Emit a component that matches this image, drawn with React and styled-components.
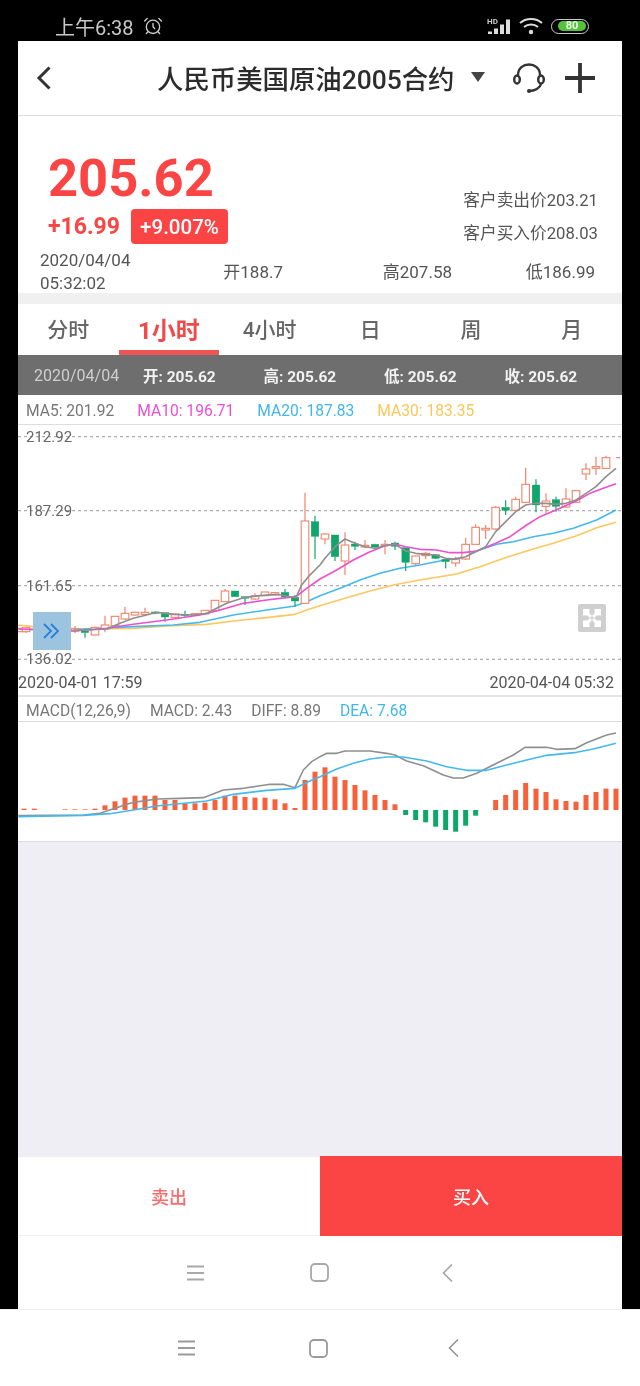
import React from "react";
import styled, { createGlobalStyle } from "styled-components";
import { AlarmClock } from "lucide-react";

// chart data was read off 3x crops, so coordinates are crop px
const lx = (x) => x / 3;
const rx = (x) => x / 3 + 320;
const cy = (y) => y / 3 + 425;
const my = (y) => y / 3 + 695;

// [x, wickTop, bodyTop, bodyBottom, wickBottom, up]
const leftCandles = [
	[60, 610, 610, 620, 622, 1],
	[78, 606, 608, 620, 624, 1],
	[225, 603, 612, 618, 625, 1],
	[255, 618, 618, 623, 638, 0],
	[285, 605, 607, 630, 632, 1],
	[315, 572, 600, 612, 622, 1],
	[345, 574, 574, 602, 604, 1],
	[375, 545, 565, 582, 585, 1],
	[405, 560, 562, 570, 572, 1],
	[435, 548, 562, 568, 572, 1],
	[465, 559, 561, 565, 568, 0],
	[495, 563, 563, 576, 590, 0],
	[525, 566, 567, 577, 578, 1],
	[555, 557, 568, 572, 575, 0],
	[585, 565, 566, 571, 573, 1],
	[615, 555, 556, 567, 569, 1],
	[645, 525, 526, 556, 558, 1],
	[675, 492, 498, 530, 531, 1],
	[705, 498, 498, 515, 516, 0],
	[735, 515, 515, 520, 540, 0],
	[765, 505, 512, 522, 525, 1],
	[795, 500, 501, 512, 513, 1],
	[825, 502, 503, 510, 512, 1],
	[855, 492, 502, 516, 518, 0],
	[885, 510, 517, 528, 545, 0],
	[915, 203, 288, 535, 537, 1],
	[945, 272, 290, 334, 402, 0],
];

const rightCandles = [
	[15, 325, 327, 342, 358, 1],
	[45, 330, 330, 395, 408, 0],
	[75, 322, 360, 408, 450, 1],
	[105, 350, 357, 364, 375, 0],
	[135, 345, 361, 366, 370, 1],
	[165, 356, 358, 366, 368, 0],
	[195, 345, 358, 362, 388, 1],
	[225, 350, 354, 364, 375, 0],
	[257, 368, 368, 412, 438, 0],
	[287, 392, 393, 416, 420, 1],
	[317, 380, 385, 392, 402, 1],
	[347, 388, 389, 400, 402, 0],
	[377, 403, 403, 410, 430, 0],
	[407, 395, 402, 414, 425, 1],
	[437, 338, 358, 402, 405, 1],
	[467, 298, 307, 358, 360, 1],
	[497, 300, 310, 315, 342, 1],
	[527, 243, 247, 312, 314, 1],
	[557, 226, 247, 256, 270, 0],
	[587, 215, 223, 256, 258, 1],
	[617, 128, 178, 232, 234, 1],
	[648, 163, 180, 240, 262, 0],
	[678, 205, 228, 244, 265, 1],
	[708, 215, 224, 244, 260, 0],
	[738, 190, 222, 246, 248, 1],
	[768, 195, 197, 232, 234, 1],
	[798, 115, 132, 147, 165, 1],
	[828, 95, 125, 130, 150, 1],
	[858, 92, 98, 130, 132, 1],
];

const candles = [
	...leftCandles.map(([x, ...rest]) => [lx(x), ...rest]),
	...rightCandles.map(([x, ...rest]) => [rx(x), ...rest]),
];

const line = (left, right, toY) =>
	[
		...left.map(([x, y]) => `${lx(x)},${toY(y)}`),
		...right.map(([x, y]) => `${rx(x)},${toY(y)}`),
	].join(" ");

const ma5 = line(
	[[220, 616], [320, 612], [360, 595], [400, 580], [440, 570], [470, 562], [520, 568], [580, 570], [620, 565], [650, 550], [680, 535], [730, 518], [780, 512], [830, 508], [870, 515], [888, 518], [905, 480], [925, 455]],
	[[0, 420], [15, 400], [45, 365], [75, 342], [105, 355], [135, 365], [165, 370], [195, 362], [225, 358], [257, 378], [287, 385], [317, 388], [347, 390], [377, 400], [407, 403], [437, 395], [467, 380], [497, 365], [527, 320], [557, 290], [587, 260], [617, 240], [648, 235], [678, 235], [708, 238], [738, 235], [768, 225], [798, 205], [828, 185], [858, 155], [888, 130]],
	cy
);
const ma10 = line(
	[[55, 612], [220, 618], [320, 610], [400, 598], [500, 585], [600, 570], [650, 558], [730, 535], [800, 525], [860, 518], [888, 515], [920, 490]],
	[[0, 462], [50, 435], [100, 405], [150, 380], [195, 362], [225, 357], [257, 365], [300, 373], [350, 375], [390, 383], [430, 383], [470, 378], [527, 355], [570, 335], [620, 300], [660, 275], [708, 255], [768, 228], [810, 205], [850, 190], [888, 176]],
	cy
);
const ma20 = line(
	[[55, 615], [100, 613], [250, 612], [400, 605], [520, 600], [600, 592], [700, 570], [800, 555], [885, 543], [920, 530]],
	[[0, 512], [60, 490], [120, 465], [180, 445], [240, 430], [300, 420], [360, 408], [420, 398], [470, 378], [530, 358], [580, 350], [640, 335], [700, 325], [760, 310], [830, 285], [888, 255]],
	cy
);
const ma30 = line(
	[[55, 600], [100, 605], [250, 612], [400, 610], [500, 603], [620, 598], [700, 588], [800, 578], [885, 568], [920, 555]],
	[[0, 542], [80, 518], [150, 498], [220, 480], [300, 465], [410, 447], [480, 425], [560, 397], [640, 372], [700, 355], [770, 332], [830, 308], [888, 292]],
	cy
);

const gridLines = [
	{ y: 436.7, label: "212.92" },
	{ y: 510.7, label: "187.29" },
	{ y: 585.7, label: "161.65" },
	{ y: 659.3, label: "136.02" },
];

const macdBase = 345;
// [x, top] in crop px, everything hangs on macdBase
const macdLeft = [[72, 341], [103, 341], [195, 343], [225, 343], [255, 343], [285, 341], [315, 331], [345, 319], [375, 308], [405, 302], [435, 302], [465, 302], [495, 315], [525, 315], [555, 325], [585, 325], [615, 323], [645, 315], [675, 302], [705, 302], [735, 306], [765, 308], [795, 308], [825, 313], [855, 325], [885, 339], [915, 255], [945, 230]];
const macdRight = [[15, 217], [45, 245], [75, 255], [105, 270], [135, 286], [165, 300], [195, 315], [225, 328], [527, 315], [557, 300], [587, 285], [617, 264], [648, 281], [678, 291], [708, 313], [738, 318], [768, 320], [798, 300], [828, 291], [858, 281], [888, 281]];
const macdDown = [[257, 360], [287, 375], [317, 382], [347, 395], [377, 405], [407, 410], [437, 392], [467, 362]];

const macdGray = line(
	[[55, 362], [250, 360], [300, 355], [345, 340], [400, 322], [470, 312], [540, 310], [610, 308], [670, 285], [730, 280], [810, 268], [850, 268], [885, 278], [910, 225], [935, 200]],
	[[0, 185], [20, 175], [50, 175], [75, 168], [150, 168], [200, 175], [225, 180], [260, 198], [310, 212], [370, 240], [400, 249], [430, 249], [470, 235], [530, 205], [580, 180], [615, 157], [680, 157], [710, 163], [765, 161], [800, 143], [860, 120], [888, 114]],
	my
);
const macdBlue = line(
	[[55, 365], [250, 361], [330, 356], [400, 345], [470, 333], [620, 318], [700, 298], [800, 286], [885, 280], [930, 258]],
	[[0, 245], [50, 222], [100, 205], [150, 192], [200, 186], [250, 186], [320, 198], [380, 215], [440, 226], [500, 226], [560, 210], [620, 195], [680, 181], [770, 172], [820, 162], [888, 145]],
	my
);

const RED = "#fb4545";
const GREEN = "#0ea66b";
const CANDLE_UP = "#f0836a";
const BAR_UP = "#f4613a";
const FONT = `Roboto, "Noto Sans CJK SC", sans-serif`;

function Candles() {
	return candles.map(([x, wt, bt, bb, wb, up]) => {
		const color = up ? CANDLE_UP : GREEN;
		return (
			<g key={x}>
				<line x1={x} x2={x} y1={cy(wt)} y2={cy(bt)} stroke={color} strokeWidth="1.2" />
				<line x1={x} x2={x} y1={cy(bb)} y2={cy(wb)} stroke={color} strokeWidth="1.2" />
				<rect
					x={x - 3.8}
					y={cy(bt)}
					width="7.6"
					height={(bb - bt) / 3}
					fill={up ? "#fff" : color}
					stroke={color}
					strokeWidth={up ? 1.1 : 0.4}
				/>
			</g>
		);
	});
}

function MainChart() {
	return (
		<ChartSvg viewBox="18 425 604 245" width="604" height="245">
			{gridLines.map((g) => (
				<line key={g.y} x1="18" x2="622" y1={g.y} y2={g.y} stroke="#9a9a9a" strokeDasharray="3 3" />
			))}
			<polyline points={ma30} fill="none" stroke="#fbc85f" strokeWidth="1.6" strokeLinejoin="round" />
			<polyline points={ma20} fill="none" stroke="#45b9ec" strokeWidth="1.6" strokeLinejoin="round" />
			<Candles />
			<line x1={rx(888)} x2={rx(900)} y1={cy(98)} y2={cy(98)} stroke={CANDLE_UP} strokeWidth="1.2" />
			<polyline points={ma10} fill="none" stroke="#ec4fd0" strokeWidth="1.6" strokeLinejoin="round" />
			<polyline points={ma5} fill="none" stroke="#8f8f8f" strokeWidth="1.6" strokeLinejoin="round" />
			{gridLines.map((g) => (
				<AxisLabel key={g.label} x="26" y={g.y + 5}>
					{g.label}
				</AxisLabel>
			))}
		</ChartSvg>
	);
}

function MacdChart() {
	const base = my(macdBase);
	return (
		<ChartSvg viewBox="18 722 604 119" width="604" height="119">
			{macdLeft.map(([x, top]) => (
				<rect key={x} x={lx(x) - 2.5} y={my(top)} width="5" height={(macdBase - top) / 3} fill={BAR_UP} />
			))}
			{macdRight.map(([x, top]) => (
				<rect key={x} x={rx(x) - 2.5} y={my(top)} width="5" height={(macdBase - top) / 3} fill={BAR_UP} />
			))}
			{macdDown.map(([x, bottom]) => (
				<rect key={x} x={rx(x) - 2.5} y={base} width="5" height={(bottom - macdBase) / 3} fill={GREEN} />
			))}
			<polyline points={macdGray} fill="none" stroke="#8f8f8f" strokeWidth="1.6" strokeLinejoin="round" />
			<polyline points={macdBlue} fill="none" stroke="#45b9ec" strokeWidth="1.6" strokeLinejoin="round" />
		</ChartSvg>
	);
}

function StatusIcons() {
	return (
		<StatusRight>
			<svg width="24" height="18" viewBox="0 0 24 18">
				<HdText x="0" y="7">
					HD
				</HdText>
				<path d="M1 17V14.5H5V17ZM7 17V11.5H11V17ZM13 17V7.5H17V17ZM19 17V2.5H23V17Z" fill="#ddd" />
			</svg>
			<svg width="24" height="18" viewBox="0 0 24 18" fill="none" stroke="#ddd" strokeWidth="2">
				<path d="M1 6C7 0.5 17 0.5 23 6" />
				<path d="M5 10C9 6.5 15 6.5 19 10" />
				<circle cx="12" cy="15" r="2.2" fill="#ddd" stroke="none" />
			</svg>
			<Battery>
				<BatteryLevel>80</BatteryLevel>
			</Battery>
		</StatusRight>
	);
}

function NavKeys({ color, columns, pad }) {
	return (
		<NavBar $columns={columns} $pad={pad}>
			<svg width="17" height="16" viewBox="0 0 17 16" stroke={color} strokeWidth="1.8">
				<path d="M0 1.5H17M0 8H17M0 14.5H17" />
			</svg>
			<svg width="19" height="19" viewBox="0 0 19 19" fill="none" stroke={color} strokeWidth="1.8">
				<rect x="1" y="1" width="17" height="17" rx="4" />
			</svg>
			<svg width="11" height="18" viewBox="0 0 11 18" fill="none" stroke={color} strokeWidth="1.7">
				<path d="M10 0.5L1.5 9L10 17.5" />
			</svg>
		</NavBar>
	);
}

function App() {
	return (
		<Page>
			<GlobalStyle />
			<StatusBar>
				<StatusLeft>
					<span>上午6:38</span>
					<AlarmClock size={20} strokeWidth={1.6} color="#ccc" />
				</StatusLeft>
				<StatusIcons />
			</StatusBar>

			<Screen>
				<Header>
					<svg width="16" height="24" viewBox="0 0 16 24" fill="none" stroke="#333" strokeWidth="3">
						<path d="M13.5 1.5L3 12L13.5 22.5" />
					</svg>
					<Title>人民币美国原油2005合约</Title>
					<Caret />
					<HeaderIcons>
						<svg width="32" height="32" viewBox="0 0 32 32" fill="none" stroke="#333" strokeWidth="2.4">
							<path d="M5 13C5 -1 27 -1 27 13" />
							<ellipse cx="4" cy="17.5" rx="2.8" ry="4" />
							<ellipse cx="28" cy="17.5" rx="2.8" ry="4" />
							<path d="M28 22C27 26 22 29 16 29" />
							<circle cx="16" cy="29" r="2" fill="#333" stroke="none" />
						</svg>
						<svg width="30" height="30" viewBox="0 0 30 30" stroke="#333" strokeWidth="3.8">
							<path d="M15 0V30M0 15H30" />
						</svg>
					</HeaderIcons>
				</Header>

				<Quote>
					<QuoteTop>
						<div>
							<Price>205.62</Price>
							<ChangeRow>
								<Change>+16.99</Change>
								<Badge>+9.007%</Badge>
							</ChangeRow>
						</div>
						<BidAsk>
							<span>客户卖出价203.21</span>
							<span>客户买入价208.03</span>
						</BidAsk>
					</QuoteTop>
					<QuoteBottom>
						<QuoteTime>
							2020/04/04
							<br />
							05:32:02
						</QuoteTime>
						<OhlcItem $width={153}>开188.7</OhlcItem>
						<OhlcItem $width={169}>高207.58</OhlcItem>
						<OhlcItem $width={143}>低186.99</OhlcItem>
					</QuoteBottom>
				</Quote>

				<Tabs>
					{["分时", "1小时", "4小时", "日", "周", "月"].map((t) => (
						<Tab key={t} $active={t === "1小时"}>
							{t}
						</Tab>
					))}
				</Tabs>

				<OhlcBar>
					<OhlcDate>2020/04/04</OhlcDate>
					<OhlcValue>开: 205.62</OhlcValue>
					<OhlcValue>高: 205.62</OhlcValue>
					<OhlcValue>低: 205.62</OhlcValue>
					<OhlcValue>收: 205.62</OhlcValue>
				</OhlcBar>

				<Legend>
					<LegendItem $color="#777">MA5: 201.92</LegendItem>
					<LegendItem $color="#e94fd6">MA10: 196.71</LegendItem>
					<LegendItem $color="#3fb6ec">MA20: 187.83</LegendItem>
					<LegendItem $color="#fbc65a">MA30: 183.35</LegendItem>
				</Legend>

				<ChartArea>
					<MainChart />
					<SlideHandle>
						<svg width="20" height="20" viewBox="0 0 20 20" fill="none" stroke="#2b7fdc" strokeWidth="1.8">
							<path d="M2 3L9 10L2 17M9 3L16 10L9 17" />
						</svg>
					</SlideHandle>
					<FullscreenButton>
						<svg width="18" height="18" viewBox="0 0 18 18" fill="#fff" stroke="#fff">
							<path d="M0 0H6V6H0ZM12 0H18V6H12ZM0 12H6V18H0ZM12 12H18V18H12Z" />
							<path d="M5 5L13 13M13 5L5 13" strokeWidth="3" />
							<rect x="7.5" y="7.5" width="3" height="3" fill="#cfcfcf" stroke="none" />
						</svg>
					</FullscreenButton>
				</ChartArea>

				<TimeRow>
					<span>2020-04-01 17:59</span>
					<span>2020-04-04 05:32</span>
				</TimeRow>

				<MacdLegend>
					<LegendItem $color="#777">MACD(12,26,9)</LegendItem>
					<LegendItem $color="#777">MACD: 2.43</LegendItem>
					<LegendItem $color="#777">DIFF: 8.89</LegendItem>
					<LegendItem $color="#3fb6ec">DEA: 7.68</LegendItem>
				</MacdLegend>

				<MacdArea>
					<MacdChart />
				</MacdArea>

				<Filler />

				<TradeRow>
					<TradeButton>卖出</TradeButton>
					<TradeButton $buy>买入</TradeButton>
				</TradeRow>

				<InnerNav>
					<NavKeys color="#a8a8a8" columns={[123, 132]} pad={169} />
				</InnerNav>
			</Screen>

			<OuterNav>
				<NavKeys color="#9a9a9a" columns={[131, 139]} pad={178} />
			</OuterNav>
		</Page>
	);
}

const GlobalStyle = createGlobalStyle`
	html, body {
		margin: 0;
		padding: 0;
		background: #000;
	}
	* {
		box-sizing: border-box;
	}
`;

const Page = styled.div`
	width: 640px;
	height: 1386px;
	background: #000;
	display: flex;
	flex-direction: column;
	font-family: ${FONT};
	overflow: hidden;
	filter: blur(0.45px);
`;

const StatusBar = styled.div`
	height: 41px;
	flex: none;
	display: flex;
	align-items: center;
	justify-content: space-between;
	padding: 11px 51px 0 55px;
	color: #c8c8c8;
	font-size: 20px;
`;

const StatusLeft = styled.div`
	display: flex;
	align-items: center;
	gap: 9px;
`;

const StatusRight = styled.div`
	display: flex;
	align-items: center;
	gap: 8px;
`;

const HdText = styled.text`
	font-size: 8px;
	font-weight: 700;
	fill: #ccc;
	font-family: Roboto, sans-serif;
`;

const Battery = styled.div`
	width: 38px;
	height: 15px;
	border: 1.5px solid #ccc;
	border-radius: 8px;
	padding: 1.5px 2px 1.5px 6px;
	display: flex;
`;

const BatteryLevel = styled.div`
	flex: 1;
	border-radius: 5px;
	background: #56c23c;
	color: #eaffea;
	font-size: 11px;
	font-weight: 700;
	line-height: 9px;
	text-align: center;
`;

const Screen = styled.div`
	flex: 1;
	margin: 0 18px;
	background: #fff;
	display: flex;
	flex-direction: column;
	min-height: 0;
`;

const Header = styled.div`
	height: 75px;
	flex: none;
	display: flex;
	align-items: center;
	padding: 0 27px 0 18px;
	border-bottom: 1px solid #dcdcdc;
`;

const Title = styled.div`
	margin-left: 105px;
	margin-top: -2px;
	font-size: 26.4px;
	font-weight: 500;
	color: #2c2c2c;
	white-space: nowrap;
`;

const Caret = styled.div`
	margin-left: 16px;
	margin-top: -3px;
	width: 0;
	height: 0;
	border-left: 7px solid transparent;
	border-right: 7px solid transparent;
	border-top: 10px solid #444;
`;

const HeaderIcons = styled.div`
	margin-left: auto;
	display: flex;
	align-items: center;
	gap: 20px;
`;

const Quote = styled.div`
	flex: none;
	border-bottom: 11px solid #f0f0f0;
	display: flex;
	flex-direction: column;
	height: 188px;
`;

const QuoteTop = styled.div`
	display: flex;
	justify-content: space-between;
	align-items: flex-end;
	padding: 32px 24px 0 30px;
	height: 128px;
`;

const Price = styled.div`
	font-size: 52.5px;
	line-height: 60px;
	font-weight: 700;
	color: ${RED};
	margin-top: 1px;
`;

const ChangeRow = styled.div`
	display: flex;
	align-items: center;
	gap: 11px;
	margin-top: 1px;
`;

const Change = styled.span`
	font-size: 23px;
	font-weight: 700;
	color: ${RED};
`;

const Badge = styled.span`
	height: 35px;
	width: 97px;
	background: ${RED};
	border-radius: 4px;
	color: #fff;
	font-size: 20.5px;
	font-weight: 500;
	display: flex;
	align-items: center;
	justify-content: center;
`;

const BidAsk = styled.div`
	display: flex;
	flex-direction: column;
	gap: 11px;
	font-size: 16.7px;
	line-height: 22px;
	color: #555;
	position: relative;
	top: 1px;
`;

const QuoteBottom = styled.div`
	display: flex;
	align-items: center;
	padding: 5px 0 0 22px;
	font-size: 17px;
	color: #555;
`;

const QuoteTime = styled.div`
	width: 90px;
	line-height: 23px;
	white-space: nowrap;
`;

const OhlcItem = styled.div`
	width: ${(p) => p.$width}px;
	margin-top: -4px;
	text-align: right;
	white-space: nowrap;
`;

const Tabs = styled.div`
	height: 51px;
	flex: none;
	display: grid;
	grid-template-columns: repeat(6, 1fr);
`;

const Tab = styled.div`
	display: flex;
	align-items: center;
	justify-content: center;
	padding-top: 2px;
	font-size: ${(p) => (p.$active ? "24px" : "21px")};
	font-weight: ${(p) => (p.$active ? 700 : 500)};
	color: ${(p) => (p.$active ? "#f04a4a" : "#666")};
	border-bottom: 5px solid ${(p) => (p.$active ? "#ee5555" : "transparent")};
`;

const OhlcBar = styled.div`
	height: 40px;
	flex: none;
	background: #6e6e6e;
	display: grid;
	grid-template-columns: 109px repeat(4, 120.5px);
	align-items: center;
	padding-left: 16px;
	font-size: 15.5px;
`;

const OhlcDate = styled.span`
	color: #cfcfcf;
	font-size: 16px;
`;

const OhlcValue = styled.span`
	color: #f2f2f2;
	font-weight: 700;
`;

const Legend = styled.div`
	height: 30px;
	flex: none;
	display: flex;
	align-items: center;
	gap: 23px;
	padding: 2px 0 0 8px;
	border-bottom: 1px solid #ddd;
`;

const LegendItem = styled.span`
	font-size: 15.6px;
	color: ${(p) => p.$color};
	white-space: nowrap;
`;

const ChartArea = styled.div`
	position: relative;
	height: 245px;
	flex: none;
`;

const ChartSvg = styled.svg`
	display: block;
`;

const AxisLabel = styled.text`
	font-size: 15px;
	fill: #666;
	font-family: ${FONT};
`;

const SlideHandle = styled.div`
	position: absolute;
	left: 15px;
	top: 187px;
	width: 38px;
	height: 38px;
	background: #9cc4df;
	display: flex;
	align-items: center;
	justify-content: center;
`;

const FullscreenButton = styled.div`
	position: absolute;
	left: 560px;
	top: 179px;
	width: 28px;
	height: 28px;
	background: #cfcfcf;
	border-radius: 2px;
	display: flex;
	align-items: center;
	justify-content: center;
`;

const TimeRow = styled.div`
	height: 27px;
	flex: none;
	display: flex;
	align-items: center;
	justify-content: space-between;
	padding-right: 8px;
	font-size: 16px;
	color: #555;
	border-bottom: 2px solid #e4e4e4;
`;

const MacdLegend = styled(Legend)`
	height: 25px;
	gap: 19px;
	padding-top: 4px;
`;

const MacdArea = styled.div`
	height: 120px;
	flex: none;
	border-bottom: 1px solid #ddd;
`;

const Filler = styled.div`
	flex: 1;
	background: #eeeef4;
`;

const TradeRow = styled.div`
	height: 80px;
	flex: none;
	display: grid;
	grid-template-columns: 302px 302px;
`;

const TradeButton = styled.div`
	display: flex;
	align-items: center;
	justify-content: center;
	font-size: 18px;
	font-weight: 500;
	background: ${(p) => (p.$buy ? RED : "#fff")};
	color: ${(p) => (p.$buy ? "#fff" : "#fb6c6c")};
	border-top: 1px solid ${(p) => (p.$buy ? RED : "#eee")};
	border-bottom: 1px solid ${(p) => (p.$buy ? RED : "#eee")};
`;

const InnerNav = styled.div`
	height: 73px;
	flex: none;
`;

const OuterNav = styled.div`
	height: 77px;
	flex: none;
	background: #fff;
	border-top: 1px solid #eee;
`;

const NavBar = styled.div`
	height: 100%;
	display: grid;
	grid-template-columns: ${(p) => p.$columns[0]}px ${(p) => p.$columns[1]}px auto;
	align-items: center;
	padding-left: ${(p) => p.$pad}px;
`;

export default App;
